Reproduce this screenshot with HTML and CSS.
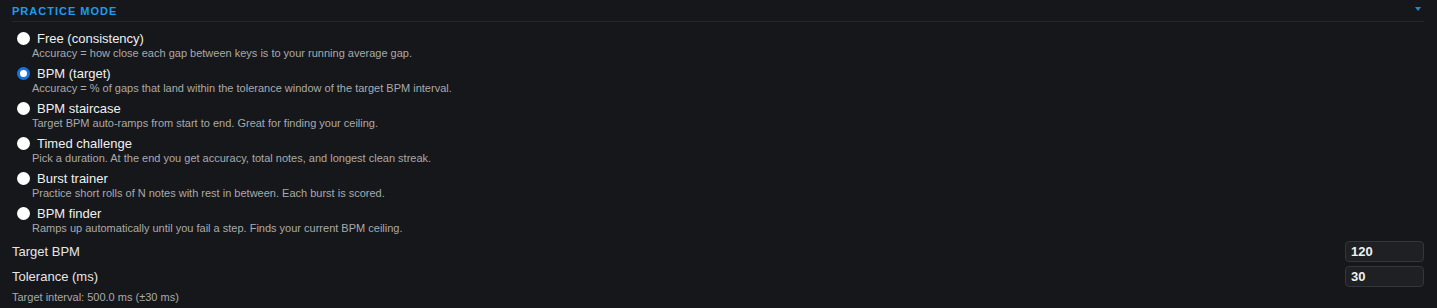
FILE: index.html
```html
<!DOCTYPE html>
<html lang="en">
<head>
    <meta charset="UTF-8">
    <title>Practice mode</title>
    <link rel="stylesheet" href="styles.css">
</head>
<body>
    <section class="panel">
        <div class="head">
            <span class="head-title">Practice Mode</span>
            <span class="caret"></span>
        </div>

        <div class="modes">
            <label class="mode">
                <input type="radio" name="mode">
                <span class="mode-text">
                    <span class="mode-name">Free (consistency)</span>
                    <span class="mode-desc">Accuracy = how close each gap between keys is to your running average gap.</span>
                </span>
            </label>
            <label class="mode">
                <input type="radio" name="mode" checked>
                <span class="mode-text">
                    <span class="mode-name">BPM (target)</span>
                    <span class="mode-desc">Accuracy = % of gaps that land within the tolerance window of the target BPM interval.</span>
                </span>
            </label>
            <label class="mode">
                <input type="radio" name="mode">
                <span class="mode-text">
                    <span class="mode-name">BPM staircase</span>
                    <span class="mode-desc">Target BPM auto-ramps from start to end. Great for finding your ceiling.</span>
                </span>
            </label>
            <label class="mode">
                <input type="radio" name="mode">
                <span class="mode-text">
                    <span class="mode-name">Timed challenge</span>
                    <span class="mode-desc">Pick a duration. At the end you get accuracy, total notes, and longest clean streak.</span>
                </span>
            </label>
            <label class="mode">
                <input type="radio" name="mode">
                <span class="mode-text">
                    <span class="mode-name">Burst trainer</span>
                    <span class="mode-desc">Practice short rolls of N notes with rest in between. Each burst is scored.</span>
                </span>
            </label>
            <label class="mode">
                <input type="radio" name="mode">
                <span class="mode-text">
                    <span class="mode-name">BPM finder</span>
                    <span class="mode-desc">Ramps up automatically until you fail a step. Finds your current BPM ceiling.</span>
                </span>
            </label>
        </div>

        <div class="field">
            <span class="field-label">Target BPM</span>
            <input class="num" type="text" value="120">
        </div>
        <div class="field">
            <span class="field-label">Tolerance (ms)</span>
            <input class="num" type="text" value="30">
        </div>
        <div class="hint">Target interval: 500.0 ms (±30 ms)</div>
    </section>
</body>
</html>
```

FILE: styles.css
```css
html, body{
    margin: 0;
    background-color: #16171b;
}
body{
    font-family: "Liberation Sans", Arial, sans-serif;
    color: #e6e6e6;
}
.panel{
    padding: 0 13px 0 12px;
}
.head{
    display: flex;
    justify-content: space-between;
    align-items: flex-start;
    height: 21px;
    border-bottom: 1px solid #25272c;
}
.head-title{
    margin-top: 5px;
    font-size: 11px;
    font-weight: 700;
    letter-spacing: 1px;
    text-transform: uppercase;
    color: #1b9cf0;
}
.caret{
    margin: 7px 3px 0 0;
    border-top: 4px solid #1b8ad6;
    border-left: 3px solid transparent;
    border-right: 3px solid transparent;
}
.modes{
    padding: 9px 0 0 4px;
}
.mode{
    display: flex;
    align-items: flex-start;
    height: 35px;
}
.mode input{
    appearance: none;
    box-sizing: border-box;
    flex: none;
    width: 13px;
    height: 13px;
    margin: 1px 7px 0 1px;
    border-radius: 50%;
    background-color: #fff;
}
.mode input:checked{
    border: 3px solid #1774dc;
}
.mode-text{
    display: flex;
    flex-direction: column;
}
.mode-name{
    font-size: 13px;
    line-height: 16px;
    color: #f0f0f0;
}
.mode-desc{
    margin-left: -5px;
    font-size: 11px;
    line-height: 13px;
    color: #aaaaaa;
}
.field{
    display: flex;
    justify-content: space-between;
    align-items: center;
    height: 25px;
}
.modes + .field{
    margin-top: -2px;
}
.field-label{
    font-size: 13px;
}
.num{
    box-sizing: border-box;
    width: 79px;
    height: 21px;
    padding: 0 5px;
    border: 1px solid #33363c;
    border-radius: 4px;
    background-color: #1e2024;
    color: #f0f0f0;
    font-family: inherit;
    font-size: 13px;
    font-weight: 700;
    outline: none;
}
.hint{
    margin-top: 2px;
    font-size: 11px;
    color: #aaaaaa;
}
```
